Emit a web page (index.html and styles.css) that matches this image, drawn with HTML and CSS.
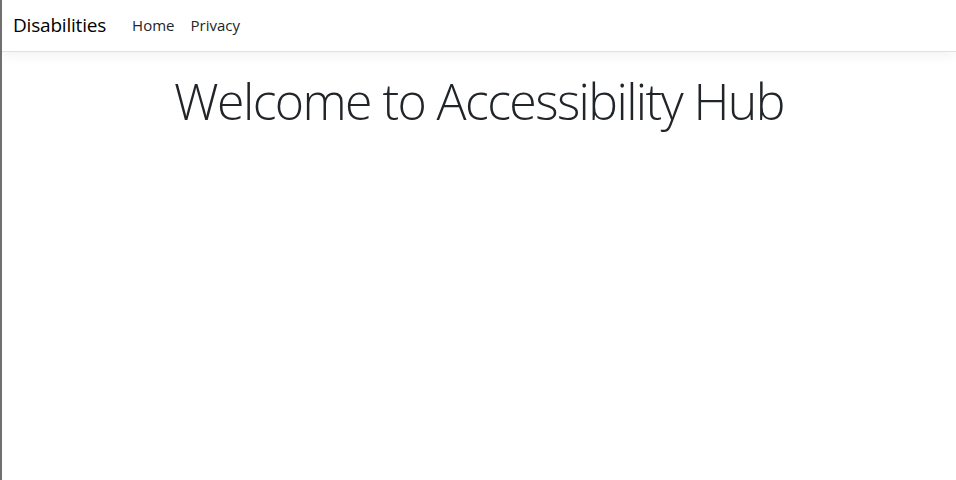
FILE: index.html
```html
<!DOCTYPE html>
<html lang="en">
<head>
<meta charset="utf-8">
<title>Disabilities</title>
<link rel="stylesheet" href="styles.css">
</head>
<body>
<header class="site-header">
  <nav class="navbar">
    <a class="brand" href="#">Disabilities</a>
    <ul class="nav-links">
      <li><a class="nav-link" href="#">Home</a></li>
      <li><a class="nav-link" href="#">Privacy</a></li>
    </ul>
  </nav>
</header>
<main class="main">
  <div class="hero">
    <h1 class="display">Welcome to Accessibility Hub</h1>
  </div>
</main>
</body>
</html>
```
FILE: styles.css
```css
html, body {
  margin: 0;
  padding: 0;
  height: 100%;
}
body {
  font-family: "Open Sans", "Noto Sans", sans-serif;
  color: #212529;
  background: #fff;
  border-left: 2px solid #707070;
  box-sizing: border-box;
}
.site-header {
  background: #fff;
  border-bottom: 1px solid #dee2e6;
  box-shadow: 0 .25rem .75rem rgba(0, 0, 0, .05);
}
.navbar {
  display: flex;
  align-items: center;
  height: 51px;
  padding: 0 11px 2px;
  box-sizing: border-box;
}
.brand {
  font-size: 19px;
  color: #000;
  text-decoration: none;
  margin-right: 18px;
  letter-spacing: -0.2px;
}
.nav-links {
  display: flex;
  list-style: none;
  margin: 0;
  padding: 0;
}
.nav-link {
  display: block;
  padding: 8px 8px;
  font-size: 15px;
  color: #212529;
  text-decoration: none;
}
.main {
  padding-top: 19px;
}
.hero {
  text-align: center;
}
.display {
  margin: 0;
  font-family: "Open Sans", sans-serif;
  font-size: 50px;
  font-weight: 300;
  line-height: 1.2;
  letter-spacing: -1.6px;
}
```
